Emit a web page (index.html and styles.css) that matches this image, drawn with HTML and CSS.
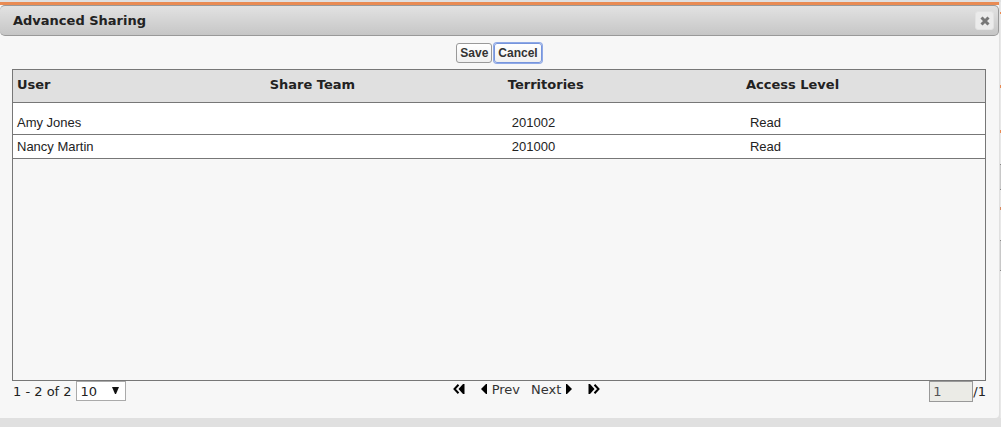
FILE: index.html
```html
<!DOCTYPE html>
<html lang="en">
<head>
<meta charset="utf-8">
<title>Advanced Sharing</title>
<link rel="stylesheet" href="styles.css">
</head>
<body>
<div class="page">
  <main class="dialog">
    <header class="titlebar">
      <h1 class="title">Advanced Sharing</h1>
      <button class="close" type="button" aria-label="Close">
        <svg width="10" height="10" viewBox="0 0 10 10"><path d="M1.5 1.5L8.500 8.500M8.500 1.500L1.500 8.500" stroke="#777" stroke-width="3"/></svg>
      </button>
    </header>
    <div class="actions">
      <button class="btn" type="button">Save</button>
      <button class="btn btn-focus" type="button">Cancel</button>
    </div>
    <div class="grid-box">
      <table class="grid">
        <colgroup><col class="col-user"><col class="col-team"><col class="col-terr"><col></colgroup>
        <thead>
          <tr><th>User</th><th>Share Team</th><th>Territories</th><th>Access Level</th></tr>
        </thead>
        <tbody>
          <tr class="first"><td>Amy Jones</td><td></td><td class="inset">201002</td><td class="inset">Read</td></tr>
          <tr><td>Nancy Martin</td><td></td><td class="inset">201000</td><td class="inset">Read</td></tr>
        </tbody>
      </table>
    </div>
    <footer class="pager">
      <div class="count">
        <label for="size">1 - 2 of 2</label>
        <span class="select-wrap">
          <select id="size" class="size"><option>10</option><option>20</option></select>
          <svg class="arrow" width="7" height="7" viewBox="0 0 7 7"><path d="M0 0H7L4 7H3Z" fill="#111"/></svg>
        </span>
      </div>
      <nav class="nav">
        <button class="nav-btn first-page" type="button" aria-label="First page">
          <svg width="12" height="10" viewBox="0 0 12 10"><path d="M5.500 .7L1.500 5L5.500 9.300" fill="none" stroke="#000" stroke-width="2"/><path d="M11.500 0V10H10L5.500 5L10 0Z"/></svg>
        </button>
        <button class="nav-btn" type="button">
          <svg width="6" height="10" viewBox="0 0 6 10"><path d="M6 0V10H5L0 5L5 0Z"/></svg>Prev
        </button>
        <button class="nav-btn next" type="button">
          Next<svg width="6" height="10" viewBox="0 0 6 10"><path d="M0 0V10H1L6 5L1 0Z"/></svg>
        </button>
        <button class="nav-btn last-page" type="button" aria-label="Last page">
          <svg width="12" height="10" viewBox="0 0 12 10"><path d="M6.500 .7L10.500 5L6.500 9.300" fill="none" stroke="#000" stroke-width="2"/><path d="M.5 0V10H2L6.500 5L2 0Z"/></svg>
        </button>
      </nav>
      <div class="goto">
        <input id="pageno" class="pageno" type="text" value="1" disabled><label for="pageno">/1</label>
      </div>
    </footer>
  </main>
  <div class="backdrop-edge"></div>
</div>
</body>
</html>
```
FILE: styles.css
```css
* { box-sizing: border-box; }

body {
  margin: 0;
  background: #e0e0e0;
  color: #222;
  font-family: "DejaVu Sans", Verdana, sans-serif;
  font-size: 12px;
}

.page {
  display: grid;
  grid-template-columns: 1fr 1px;
  column-gap: 1px;
  padding-top: 2px;
}

.dialog {
  background: #f7f7f7;
  border-top: 3px solid #e98b54;
  border-radius: 0 0 4px 0;
  padding-bottom: 16px;
}

.titlebar {
  display: flex;
  align-items: center;
  justify-content: space-between;
  height: 31px;
  padding: 0 4px 0 13px;
  border: solid #999;
  border-width: 1px 1px 1px 0;
  border-radius: 5px;
  background: linear-gradient(#e2e2e2, #c6c6c6);
}

.title {
  margin: 0;
  font-size: 13px;
  line-height: 16px;
}

.close {
  display: flex;
  align-items: center;
  justify-content: center;
  width: 19px;
  height: 19px;
  padding: 0;
  border: 1px solid #e2e2e2;
  border-radius: 3px;
  background: #ebebeb;
}

.actions {
  display: flex;
  justify-content: center;
  gap: 2px;
  padding: 7px 1px 6px 0;
}

.btn {
  height: 20px;
  padding: 0 3px;
  border: 1px solid #999;
  border-radius: 3px;
  background: linear-gradient(#fff, #f0f0f0);
  color: #333;
  font: bold 12px "Liberation Sans", Arial, sans-serif;
}

.btn-focus {
  border-color: #7795dc;
  box-shadow: 0 0 0 1px #8fa9e6;
}

.grid-box {
  min-height: 312px;
  margin: 0 13px 0 12px;
  border: 1px solid #777;
}

.grid {
  width: 100%;
  border-collapse: separate;
  border-spacing: 0;
  table-layout: fixed;
}

.col-user { width: 26%; }
.col-team,
.col-terr { width: 24.5%; }

.grid th {
  height: 33px;
  padding: 0 4px 3px;
  border-bottom: 1px solid #777;
  background: #e0e0e0;
  font-size: 13px;
  text-align: left;
}

.grid td {
  height: 24px;
  padding: 0 4px;
  border-bottom: 1px solid #777;
  background: #fff;
  font: 13px/16px "Liberation Sans", Arial, sans-serif;
}

.grid .first td {
  height: 32px;
  padding-top: 8px;
}

.grid .inset { padding-left: 8px; }

.pager {
  display: grid;
  grid-template-columns: 8fr auto 7fr;
  align-items: start;
  margin: 0 13px 0 12px;
  font-size: 13px;
}

.count,
.goto {
  display: flex;
  align-items: center;
}

.count {
  gap: 4px;
  padding-left: 1px;
}

.goto { justify-content: flex-end; }

.select-wrap {
  display: flex;
  position: relative;
}

.size {
  width: 50px;
  height: 20px;
  padding: 0 4px;
  appearance: none;
  border: 1px solid #aaa;
  border-radius: 0;
  background: #fff;
  color: #222;
  font: inherit;
}

.arrow {
  position: absolute;
  top: 6px;
  right: 7px;
  pointer-events: none;
}

.pageno {
  width: 44px;
  height: 21px;
  padding: 0 3px;
  border: 1px solid #999;
  background: #ebebe6;
  color: #555;
  font: inherit;
}

.nav {
  display: flex;
  align-items: center;
}

.nav-btn {
  display: flex;
  align-items: center;
  gap: 5px;
  height: 16px;
  padding: 0;
  border: 0;
  background: none;
  color: #333;
  font: inherit;
}

.first-page { margin-right: 16px; }
.next { margin-left: 11px; }
.last-page { margin-left: 16px; }

.backdrop-edge {
  background: linear-gradient(
    #e8e8e8 10px, #e98b54 10px 12px,
    #e8e8e8 12px 83px, #e98b54 83px 86px,
    #e8e8e8 86px 128px, #e98b54 128px 131px,
    #e8e8e8 131px 162px, #888 162px 163px,
    #c8c8c8 163px 187px, #888 187px 188px,
    #e8e8e8 188px 205px, #d98a60 205px 208px,
    #e8e8e8 208px 238px, #888 238px 239px,
    #c8c8c8 239px 268px, #888 268px 269px,
    #e8e8e8 269px);
}
```
